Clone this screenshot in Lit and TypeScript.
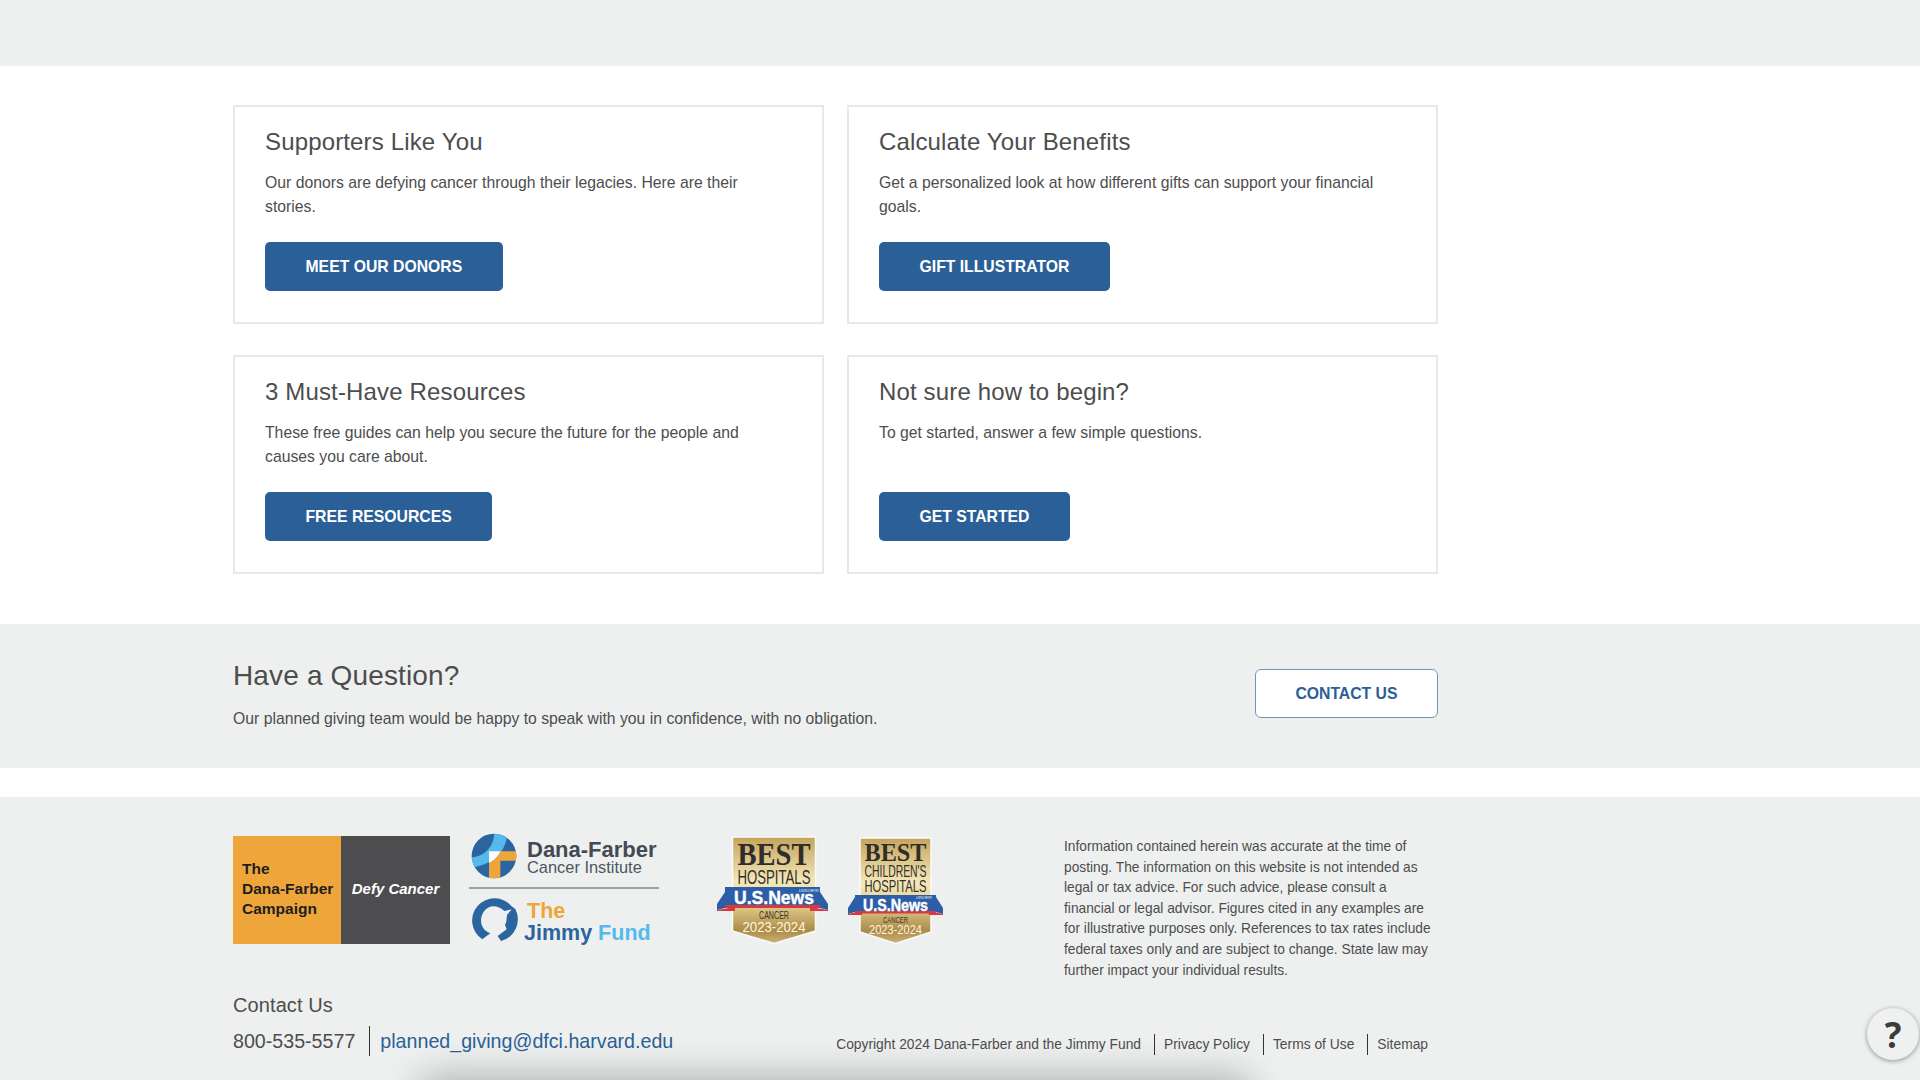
import { LitElement, html, css, svg } from "lit";
import { customElement } from "lit/decorators.js";

const cards = [
  { t: "Supporters Like You", d: "Our donors are defying cancer through their legacies. Here are their stories.", b: "MEET OUR DONORS" },
  { t: "Calculate Your Benefits", d: "Get a personalized look at how different gifts can support your financial goals.", b: "GIFT ILLUSTRATOR" },
  { t: "3 Must-Have Resources", d: "These free guides can help you secure the future for the people and causes you care about.", b: "FREE RESOURCES" },
  { t: "Not sure how to begin?", d: "To get started, answer a few simple questions.", b: "GET STARTED" },
];

const logos = svg`<svg class="logos" width="200" height="120" viewBox="0 0 200 120">
  <defs><clipPath id="dfc"><circle cx="87" cy="78" r="67"/></clipPath></defs>
  <g transform="translate(-4 -3) scale(.3333)" clip-path="url(#dfc)">
    <rect x="0" y="0" width="170" height="160" fill="#2b659f"/>
    <path d="M88 5 L127 12 C122 60 95 102 15 114 L15 83 C60 80 88 50 88 5Z" fill="#56b9ec"/>
    <path d="M72 64 L106 64 C100 80 90 90 72 100Z" fill="#fff"/>
    <path d="M106 64 H160 V92 H106 V150 H72 V100 C90 90 100 80 106 64Z" fill="#eea63a"/>
  </g>
  <text x="58" y="24" class="df">Dana-Farber</text>
  <text x="58" y="40" class="ci">Cancer Institute</text>
  <rect x="0" y="54.500" width="190" height="1" fill="#4d5560"/>
  <g transform="translate(-4 57) scale(.3333)">
    <path fill="#2b659f" fill-rule="evenodd" d="M52 148 A67 67 0 1 1 140 49 L151 57 A67 67 0 0 1 108 153 L98 138 L125 118 L120 105 L124 95 L126 75 L140 58 L118 63 C105 50 85 45 72 52 C53 60 44 85 50 105 C55 118 64 125 76 130Z"/>
  </g>
  <text x="58" y="85" class="the">The</text>
  <text x="55" y="107" class="jf"><tspan fill="#2b659f">Jimmy</tspan> <tspan fill="#56b9ec">Fund</tspan></text>
</svg>`;

const badges = svg`<svg class="badges" width="230" height="110" viewBox="0 0 230 110">
  <defs>
    <linearGradient id="gold" x1="0" y1="0" x2="0" y2="1">
      <stop offset="0" stop-color="#c4a45c"/><stop offset=".42" stop-color="#f3e8b8"/>
      <stop offset=".62" stop-color="#e6d295"/><stop offset=".88" stop-color="#ab8b47"/><stop offset="1" stop-color="#cdb37a"/>
    </linearGradient>
  </defs>
  <g>
    <path d="M15.500 1 H98.500 V95 L57 107.500 L15.500 95Z" fill="url(#gold)" stroke="#fafafa" stroke-width="1.500"/>
    <text x="57" y="29" class="best" textLength="73" lengthAdjust="spacingAndGlyphs">BEST</text>
    <text x="57" y="48" class="hosp" textLength="73" lengthAdjust="spacingAndGlyphs">HOSPITALS</text>
    <path d="M0 68 L8 56 L8 72 L0 74Z M111 68 L103 56 L103 72 L111 74Z" fill="#2b5ea6"/>
    <path d="M0 74 L18 71 V75 H0Z M111 74 L93 71 V75 H111Z" fill="#d63a3d"/>
    <rect x="8" y="51" width="95" height="18" fill="#2b5ea6"/>
    <rect x="8" y="69" width="95" height="3" fill="#d8393c"/>
    <text x="57" y="68" class="usn" textLength="80" lengthAdjust="spacingAndGlyphs">U.S.News</text>
    <text x="92" y="55.500" class="wr" textLength="20" lengthAdjust="spacingAndGlyphs">&amp; WORLD REPORT</text>
    <text x="57" y="83" class="can" textLength="30" lengthAdjust="spacingAndGlyphs">CANCER</text>
    <text x="57" y="96" class="yr" textLength="63" lengthAdjust="spacingAndGlyphs">2023-2024</text>
  </g>
  <g transform="translate(131 0)">
    <path d="M12 2 H83 V96 L47.500 107.500 L12 96Z" fill="url(#gold)" stroke="#fafafa" stroke-width="1.500"/>
    <text x="47.500" y="25" class="best2" textLength="62" lengthAdjust="spacingAndGlyphs">BEST</text>
    <text x="47.500" y="41" class="hosp2" textLength="62" lengthAdjust="spacingAndGlyphs">CHILDREN'S</text>
    <text x="47.500" y="56" class="hosp2" textLength="62" lengthAdjust="spacingAndGlyphs">HOSPITALS</text>
    <path d="M0 72 L7 61 L7 76 L0 78Z M95 72 L88 61 L88 76 L95 78Z" fill="#2b5ea6"/>
    <path d="M0 78 L14 75 V79 H0Z M95 78 L81 75 V79 H95Z" fill="#d63a3d"/>
    <rect x="7" y="59" width="81" height="16" fill="#2b5ea6"/>
    <rect x="7" y="75" width="81" height="2.500" fill="#d8393c"/>
    <text x="47.500" y="74.500" class="usn2" textLength="65" lengthAdjust="spacingAndGlyphs">U.S.News</text>
    <text x="76" y="62.800" class="wr2" textLength="16" lengthAdjust="spacingAndGlyphs">&amp; WORLD REPORT</text>
    <text x="47.500" y="87" class="can2" textLength="25" lengthAdjust="spacingAndGlyphs">CANCER</text>
    <text x="47.500" y="98" class="yr2" textLength="53" lengthAdjust="spacingAndGlyphs">2023-2024</text>
  </g>
</svg>`;

@customElement("app-root")
export class AppRoot extends LitElement {
  static styles = css`
    :host { display: block; height: 1080px; overflow: hidden; position: relative; background: #fff;
      font-family: "Liberation Sans", Arial, sans-serif; color: #4d4d4d; }
    .top { height: 66px; background: #eef0f0; }
    .wrap { width: 1205px; margin-left: 233px; }
    .grid { display: grid; grid-template-columns: 591px 591px; column-gap: 23px; row-gap: 31px; padding-top: 39px; padding-bottom: 50px; }
    .card { box-sizing: border-box; height: 219px; border: 2px solid #e8e8e8; padding: 19px 30px 0; display: flex; flex-direction: column; align-items: flex-start; }
    .card h2 { margin: 0; font-size: 24px; line-height: 32px; font-weight: 400; letter-spacing: .15px; }
    .card p { margin: 13px 0 0; font-size: 15.750px; line-height: 24px; height: 48px; }
    .btn { box-sizing: border-box; height: 49px; margin-top: 23px; padding: 0 40.500px; display: flex; align-items: center; border-radius: 5px;
      background: #2a6097; color: #fff; font-weight: 700; font-size: 15.750px; text-decoration: none; white-space: nowrap; }
    .question { background: #eef0f0; height: 144px; }
    .question .wrap { display: flex; justify-content: space-between; align-items: flex-start; }
    .question h2 { margin: 34px 0 0; font-size: 28px; line-height: 36px; font-weight: 400; letter-spacing: .15px; }
    .question p { margin: 13px 0 0; font-size: 15.750px; line-height: 24px; }
    .outline { margin-top: 45px; background: #fff; color: #2a6097; border: 1.500px solid #6c96bf; border-radius: 6px; padding: 0 39.500px; }
    .footer { background: #eef0f0; margin-top: 29px; height: 284px; position: relative; overflow: hidden; }
    .frow { display: flex; align-items: flex-start; padding-top: 39px; }
    .camp { display: flex; width: 217px; height: 108px; flex: none; font-weight: 700; font-size: 15.500px; line-height: 20px; }
    .camp .a { box-sizing: border-box; flex: 0 0 108px; background: #eea63a; color: #1d1d1d; display: flex; align-items: center; padding: 0 0 2px 9px; white-space: nowrap; }
    .camp .b { flex: 1; background: #4d4d4f; color: #fff; display: flex; align-items: center; justify-content: center; font-style: italic; font-size: 15px; white-space: nowrap; padding-bottom: 2px; }
    .logos { margin: -3px 0 0 19px; flex: none; }
    .badges { margin: 0 0 0 48px; flex: none; }
    .disc { margin: 1px 0 0 auto; width: 374px; font-size: 13.750px; line-height: 20.600px; }
    .fbot { display: flex; justify-content: space-between; align-items: flex-end; margin-top: 11px; }
    .contact h3 { margin: 0; font-size: 20px; line-height: 26px; font-weight: 400; letter-spacing: .1px; }
    .cline { display: flex; align-items: center; margin-top: 8px; font-size: 19.650px; }
    .cline span { padding-right: 14px; border-right: 1.500px solid #333; line-height: 30px; }
    .cline a { color: #2a6097; padding-left: 10px; text-decoration: none; }
    .legal { display: flex; align-items: center; font-size: 13.820px; line-height: 21px; margin: 0 10px 1px 0; }
    .legal a { color: inherit; text-decoration: none; border-left: 1.500px solid #333; margin-left: 13px; padding-left: 9px; }
    .shade { position: absolute; left: 430px; width: 810px; top: 1090px; height: 20px; background: #888; box-shadow: 0 0 36px 14px rgba(0,0,0,.27); border-radius: 10px; }
    .help { position: absolute; left: 1867px; top: 1008px; width: 52px; height: 52px; border-radius: 50%; background: #eff0f0;
      box-shadow: 0 1px 5px rgba(0,0,0,.4); display: flex; align-items: center; justify-content: center; font: 700 35px "Open Sans", sans-serif; color: #3c3c3c; }
    svg text { font-family: "Liberation Sans", Arial, sans-serif; }
    .df { font-size: 22px; font-weight: 700; fill: #434a54; }
    .ci { font-size: 16.400px; fill: #4d5560; }
    .the { font-size: 21.500px; font-weight: 700; fill: #eea63a; }
    .jf { font-size: 21.500px; font-weight: 700; }
    svg text.best, svg text.best2 { font-family: "Liberation Serif", serif; font-weight: 700; fill: #2f2c29; text-anchor: middle; }
    .best { font-size: 32px; } .best2 { font-size: 26px; }
    .hosp, .hosp2 { fill: #332f2b; text-anchor: middle; } .hosp { font-size: 20px; } .hosp2 { font-size: 16.500px; }
    .usn, .usn2 { fill: #fff; stroke: #fff; stroke-width: .4px; font-weight: 700; text-anchor: middle; } .usn { font-size: 18px; } .usn2 { font-size: 16px; }
    .wr, .wr2 { fill: #fff; text-anchor: middle; } .wr { font-size: 3.500px; } .wr2 { font-size: 3px; }
    .can, .can2 { fill: #3d3426; text-anchor: middle; } .can { font-size: 10px; } .can2 { font-size: 8.500px; }
    .yr, .yr2 { fill: #fff6df; text-anchor: middle; } .yr { font-size: 14px; } .yr2 { font-size: 12px; }
  `;

  render() {
    return html`
      <div class="top"></div>
      <div class="wrap grid">
        ${cards.map((c) => html`<div class="card"><h2>${c.t}</h2><p>${c.d}</p><a class="btn" href="#">${c.b}</a></div>`)}
      </div>
      <div class="question"><div class="wrap">
        <div><h2>Have a Question?</h2><p>Our planned giving team would be happy to speak with you in confidence, with no obligation.</p></div>
        <a class="btn outline" href="#">CONTACT US</a>
      </div></div>
      <div class="footer"><div class="wrap">
        <div class="frow">
          <div class="camp"><div class="a"><div>The<br />Dana-Farber<br />Campaign</div></div><div class="b">Defy Cancer</div></div>
          ${logos}
          ${badges}
          <div class="disc">Information contained herein was accurate at the time of posting. The information on this website is not intended as legal or tax advice. For such advice, please consult a financial or legal advisor. Figures cited in any examples are for illustrative purposes only. References to tax rates include federal taxes only and are subject to change. State law may further impact your individual results.</div>
        </div>
        <div class="fbot">
          <div class="contact"><h3>Contact Us</h3><div class="cline"><span>800-535-5577</span><a href="#">planned_giving@dfci.harvard.edu</a></div></div>
          <div class="legal"><div>Copyright 2024 Dana-Farber and the Jimmy Fund</div><a href="#">Privacy Policy</a><a href="#">Terms of Use</a><a href="#">Sitemap</a></div>
        </div>
      </div></div>
      <div class="shade"></div>
      <div class="help">?</div>
    `;
  }
}
